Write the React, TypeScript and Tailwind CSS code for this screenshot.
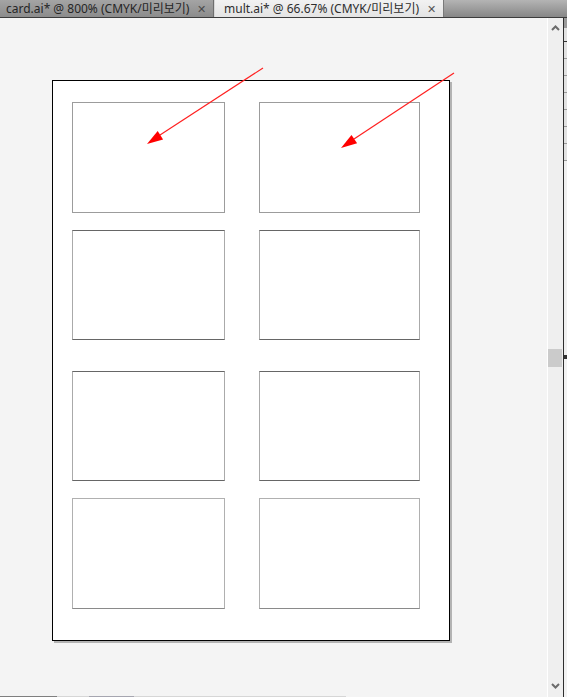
import React from 'react';

const rowClass = 'flex gap-[34px]';

function Card({ w, h, edge }: { w: string; h: string; edge: string }) {
  return <div className={`${w} ${h} bg-white border ${edge}`} />;
}

function Chevron({ up }: { up?: boolean }) {
  return (
    <svg width="9" height="6" viewBox="0 0 9 6" className="block">
      <path
        d={up ? 'M1 5 L4.5 1.5 L8 5' : 'M1 1 L4.5 4.5 L8 1'}
        fill="none"
        stroke="#6b6b6b"
        strokeWidth="2"
      />
    </svg>
  );
}

export default function App() {
  return (
    <div className="relative w-[567px] h-[697px] overflow-hidden flex flex-col bg-[#f4f4f4] font-['Noto_Sans','Noto_Sans_CJK_KR',sans-serif]">
      {/* document tabs */}
      <div className="h-[18px] shrink-0 flex border-b border-[#3c3c3c] bg-gradient-to-b from-[#b4b4b4] to-[#878787] text-[12px] leading-[17px]">
        <div className="w-[214px] flex items-center justify-between pl-[6px] pr-[7px] bg-gradient-to-b from-[#a4a4a4] to-[#8c8c8c] text-[#262626] border-r border-[#6e6e6e]">
          <span className="whitespace-nowrap">card.ai* @ 800% (CMYK/미리보기)</span>
          <span className="text-[#4a4a4a] text-[11px]">✕</span>
        </div>
        <div className="w-px bg-[#d6d6d6]" />
        <div className="w-[229px] flex items-center justify-between pl-[9px] pr-[7px] bg-gradient-to-b from-[#f2f2f2] to-[#e4e4e4] text-[#2e2e2e] border-r border-[#7a7a7a]">
          <span className="whitespace-nowrap">mult.ai* @ 66.67% (CMYK/미리보기)</span>
          <span className="text-[#555] text-[11px]">✕</span>
        </div>
      </div>

      <div className="flex-1 flex min-h-0">
        {/* canvas */}
        <div className="w-[547px] flex flex-col">
          <div className="flex-1 pl-[52px] pt-[62px]">
            <div className="w-[398px] h-[561px] bg-white border border-black shadow-[2px_2px_0_#b3b3b3] pl-[19px] pt-[21px] flex flex-col">
              <div className={rowClass}>
                <Card w="w-[153px]" h="h-[111px]" edge="border-[#9c9c9c]" />
                <Card w="w-[161px]" h="h-[111px]" edge="border-[#9c9c9c]" />
              </div>
              <div className={`${rowClass} mt-[17px]`}>
                <Card w="w-[153px]" h="h-[110px]" edge="border-[#aaa] border-y-[#666]" />
                <Card w="w-[161px]" h="h-[110px]" edge="border-[#aaa] border-y-[#666]" />
              </div>
              <div className={`${rowClass} mt-[31px]`}>
                <Card w="w-[153px]" h="h-[110px]" edge="border-[#aaa] border-y-[#666]" />
                <Card w="w-[161px]" h="h-[110px]" edge="border-[#aaa] border-y-[#666]" />
              </div>
              <div className={`${rowClass} mt-[17px]`}>
                <Card w="w-[153px]" h="h-[111px]" edge="border-[#b0b0b0] border-b-[#8a8a8a]" />
                <Card w="w-[161px]" h="h-[111px]" edge="border-[#b0b0b0] border-b-[#8a8a8a]" />
              </div>
            </div>
          </div>
          {/* horizontal scroll strip */}
          <div className="h-px flex">
            <div className="w-[57px] bg-[#7f7f7f]" />
            <div className="w-[32px] bg-[#d6d6d6]" />
            <div className="w-[45px] bg-[#a6a6b0]" />
            <div className="w-[212px] bg-[#d6d6d6]" />
          </div>
        </div>

        <div className="w-px bg-white" />

        {/* vertical scrollbar */}
        <div className="w-[15px] bg-[#efefef] flex flex-col items-center">
          <div className="pt-[7px] pb-[2px]">
            <Chevron up />
          </div>
          <div className="flex-1 w-full pt-[316px]">
            <div className="w-[14px] h-[18px] bg-[#cbcbcb]" />
          </div>
          <div className="pb-[8px]">
            <Chevron />
          </div>
        </div>

        <div className="w-px bg-[#2e2e2e]" />

        {/* neighbouring panel edge */}
        <div className="flex-1 bg-[#e2e2e2] flex flex-col">
          <div className="h-[10px] bg-[#9a9a9a]" />
          <div className="h-[14px] border-b border-[#333]" />
          <div className="h-[17px] border-b border-[#999]" />
          <div className="h-[17px] border-b border-[#999]" />
          <div className="h-[17px] border-b border-[#999]" />
          <div className="h-[17px] border-b border-[#999]" />
          <div className="h-[17px] border-b border-[#999]" />
          <div className="h-[17px] border-b border-[#999]" />
          <div className="h-[17px] border-b border-[#999]" />
          <div className="h-[194px] bg-[#f0f0f0]" />
          <div className="h-[4px] bg-[#333]" />
          <div className="flex-1 bg-[#f2f2f2]" />
        </div>
      </div>

      {/* annotation arrows drawn over the canvas */}
      <svg className="absolute inset-0 pointer-events-none" width="567" height="697" viewBox="0 0 567 697">
        <line x1="263" y1="68" x2="160" y2="135" stroke="#ff2020" strokeWidth="1.2" />
        <polygon points="147,144 163.1,139.4 157.7,131" fill="#ff0000" />
        <line x1="454" y1="73" x2="354" y2="139" stroke="#ff2020" strokeWidth="1.2" />
        <polygon points="341,148 357.1,143.3 351.5,135" fill="#ff0000" />
      </svg>
    </div>
  );
}
